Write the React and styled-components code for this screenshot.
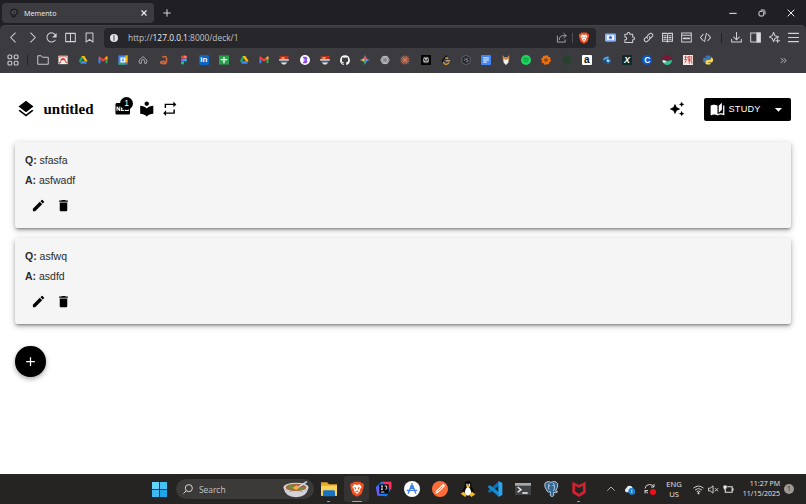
import React from "react";
import styled, { createGlobalStyle } from "styled-components";
import {
  MdLayers,
  MdFiberNew,
  MdLocalLibrary,
  MdRepeat,
  MdEdit,
  MdDelete,
  MdAdd,
  MdAutoAwesome,
  MdAutoStories,
  MdArrowDropDown
} from "react-icons/md";

const BraveLogo = () => (
  <svg viewBox="0 0 24 24">
    <path d="M7 1h10l2 2.500 2-.2 1.500 3-1 2.700 .3 1-3 9.500L12 23.500 5.200 19.500 2.200 10l.3-1-1-2.700L3 3.300l2 .2z" fill="#f4501e" />
    <path d="M12 6l4-1 3 4-3 4 .5 2-4.500 4.500L7.500 15l.5-2-3-4 3-4z" fill="#fff" />
    <path d="M7.500 9l3.300 1-.6 3.500zM16.500 9l-3.300 1 .6 3.500zM9.500 15.300l2.500-1 2.500 1-2.500 1.800z" fill="#f4501e" />
  </svg>
);

const DriveLogo = () => (
  <svg viewBox="0 0 24 24">
    <path d="M8.500 2.500h7L12 8.700 5.500 20 2 14z" fill="#20a464" />
    <path d="M8.500 2.500h7L23 14.500h-7z" fill="#fbbc04" />
    <path d="M9 14.500h14L19.500 21h-14z" fill="#4285f4" />
  </svg>
);

const GmailLogo = () => (
  <svg viewBox="0 0 24 24">
    <path d="M1 6v14h5V10z" fill="#4285f4" />
    <path d="M23 6v14h-5V10z" fill="#34a853" />
    <path d="M1 6c0-2 2.500-3 4-1.700l7 5.200 7-5.200C20.500 3 23 4 23 6l-1 3-10 7L2 9z" fill="#e94235" />
    <path d="M23 6c0-2-2.500-3-4-1.700l-1 .8V12l5-4z" fill="#fbbc04" />
  </svg>
);

const SheepLogo = () => (
  <svg viewBox="0 0 24 24">
    <path d="M1 1l5 3 5-2 6 1 6-2-1 9H2z" fill="#c9301f" />
    <path d="M6 5h7v4H6z" fill="#f2b632" />
    <path d="M0 10h24l-1 4H1z" fill="#f3ece0" />
    <path d="M2 14h20l-2 4H4z" fill="#3465a8" />
    <path d="M4 18h16l-5 5H9z" fill="#e9e5da" />
  </svg>
);

const bookmarks = [
  <svg viewBox="0 0 24 24" fill="none" stroke="#c9c9cc" strokeWidth="2">
    <path d="M1.500 3.500h7l2.500 3h11.500v14h-21z" strokeLinejoin="round" />
  </svg>,
  <svg viewBox="0 0 24 24">
    <path d="M1 2h22v20H1z" fill="#f4eeec" />
    <path d="M1 2h22v4l-4 1-4-2-8 1-4 2-2-1z" fill="#e0a49d" />
    <path d="M5 13q1-6 7-6t7 6l-3 1q-4-4-8 0z" fill="#d8382b" />
    <path d="M3 20l4-4M17 15l4 4" stroke="#a3322c" strokeWidth="2.500" />
  </svg>,
  <DriveLogo />,
  <GmailLogo />,
  <svg viewBox="0 0 24 24">
    <path d="M1 1h22v22H1z" fill="#4285f4" />
    <path d="M18 1h5v17h-5z" fill="#fbbc04" />
    <path d="M1 18h17v5H1z" fill="#34a853" />
    <path d="M18 18h5l-5 5z" fill="#ea4335" />
    <path d="M6 6h12v12H6z" fill="#fff" />
    <path d="M12.500 8v8M13 8l-4 5h6" stroke="#4285f4" strokeWidth="1.800" fill="none" />
  </svg>,
  <svg viewBox="0 0 24 24" fill="none" stroke="#b9b9bd" strokeWidth="2">
    <path d="M8 20H4q-3-6 0-9l8-7 8 7q3 3 0 9h-4v-5a4 4 0 0 0-8 0z" strokeLinejoin="round" />
  </svg>,
  <svg viewBox="0 0 24 24" fill="none" stroke="#d4673b" strokeWidth="4">
    <path d="M8 5q9-4 10 3v7q-1 6-7 6-7 0-7-4l7-2 3 2" />
  </svg>,
  <svg viewBox="0 0 24 24">
    <path d="M12 1H8.500a3.600 3.600 0 0 0 0 7.300H12z" fill="#f24e1e" />
    <path d="M12 1h3.500a3.600 3.600 0 0 1 0 7.300H12z" fill="#ff7262" />
    <path d="M12 8.300H8.500a3.600 3.600 0 0 0 0 7.300H12z" fill="#a259ff" />
    <circle cx="15.500" cy="12" r="3.600" fill="#1abcfe" />
    <path d="M12 15.600H8.500a3.700 3.700 0 1 0 3.500 3.700z" fill="#0acf83" />
  </svg>,
  <LetterTile $bg="#0a66c2" $size="8px">in</LetterTile>,
  <svg viewBox="0 0 24 24">
    <path d="M0 1h24v22H0z" fill="#27a04c" />
    <path d="M12 5v15M4 11h16" stroke="#fff" strokeWidth="3" />
  </svg>,
  <DriveLogo />,
  <GmailLogo />,
  <SheepLogo />,
  <svg viewBox="0 0 24 24">
    <circle cx="12" cy="12" r="12" fill="#fff" />
    <path d="M7 4h7l4 3-2 5 2 5-4 3H7v-4h3V8H7z" fill="#8645e8" />
    <path d="M7 10h6v3H7z" fill="#c9a4ff" />
  </svg>,
  <SheepLogo />,
  <svg viewBox="0 0 24 24">
    <path
      d="M12 .5a12 12 0 0 0-3.800 23.300c.6.100.8-.3.800-.6v-2.200c-3.300.7-4-1.400-4-1.400-.6-1.400-1.300-1.800-1.300-1.800-1.100-.7.100-.7.100-.7 1.200.1 1.800 1.200 1.800 1.200 1.100 1.800 2.800 1.300 3.500 1 .1-.8.400-1.300.8-1.600-2.700-.3-5.500-1.300-5.500-6 0-1.300.5-2.400 1.200-3.200-.1-.3-.5-1.500.1-3.200 0 0 1-.3 3.300 1.200a11.500 11.500 0 0 1 6 0c2.300-1.500 3.300-1.200 3.300-1.200.7 1.700.2 2.900.1 3.200.8.800 1.200 1.900 1.200 3.200 0 4.700-2.800 5.700-5.500 6 .4.400.8 1.100.8 2.200v3.300c0 .3.200.7.800.6A12 12 0 0 0 12 .5z"
      fill="#fff"
    />
  </svg>,
  <svg viewBox="0 0 24 24">
    <path d="M12 0q2 9.500 12 12-10 2-12 12Q10 14 0 12 10 10 12 0z" fill="#4e8df5" />
    <path d="M12 0q1 6 5 9l-5 3-4-3.200Q11 6 12 0z" fill="#e5554a" />
    <path d="M0 12q6-1 8.500-3.500L12 12l-4 3.500Q5 13 0 12z" fill="#e9b92e" />
    <path d="M12 24q-1-5-4-8.500l4-3.500 2 3z" fill="#34a866" />
  </svg>,
  <svg viewBox="0 0 24 24" fill="none" stroke="#c8c8ca" strokeWidth="2">
    <ellipse cx="12" cy="12" rx="10" ry="5.500" />
    <ellipse cx="12" cy="12" rx="10" ry="5.500" transform="rotate(60 12 12)" />
    <ellipse cx="12" cy="12" rx="10" ry="5.500" transform="rotate(120 12 12)" />
    <circle cx="12" cy="12" r="3" />
  </svg>,
  <svg viewBox="0 0 24 24" stroke="#d97757" strokeWidth="2">
    <path d="M12 1v22M1 12h22M4 4l16 16M20 4L4 20M7.500 2l9 20M16.500 2l-9 20M2 7.500l20 9M2 16.500l20-9" />
  </svg>,
  <svg viewBox="0 0 24 24">
    <path d="M0 0h24v24H0z" fill="#050505" />
    <path
      d="M12 4v16M6 9h12v7H6zM7.500 5l4.500 4 4.500-4v4M7.500 5v4M12 10l-4 4v5M12 10l4 4v5"
      stroke="#e5e5e5"
      strokeWidth="1.500"
      fill="none"
    />
  </svg>,
  <svg viewBox="0 0 24 24" fill="none" strokeWidth="3">
    <path d="M14 1L4 12q-2 3 1 6" stroke="#111" />
    <path d="M17 9q-4-4-7-1M5 17l5 5q3 1 6-1l3-3" stroke="#e5a02d" />
    <path d="M11 14h11" stroke="#b9b9b9" />
  </svg>,
  <svg viewBox="0 0 24 24">
    <path d="M12 1l10 4v14l-10 4-10-4V5z" fill="#26272d" stroke="#666971" strokeWidth="2" />
    <path d="M7 8l4 3-4 3M17 8h-4v4h4v4h-5" stroke="#8c8f97" strokeWidth="1.800" fill="none" />
  </svg>,
  <svg viewBox="0 0 24 24">
    <rect x="0" y="0" width="24" height="24" rx="2" fill="#4285f4" />
    <path d="M5 7h14M5 12h14M5 17h9" stroke="#fff" strokeWidth="2.400" />
  </svg>,
  <svg viewBox="0 0 24 24">
    <path d="M4 0l4 5h8l4-5v10l-3 5-5 7-5-7-3-5z" fill="#c98745" />
    <path d="M6 9l6 3 6-3v9l-6 6-6-6z" fill="#f1eee8" />
  </svg>,
  <svg viewBox="0 0 24 24">
    <circle cx="12" cy="12" r="12" fill="#1ed760" />
    <path d="M5 8q8-2.500 14 1M6 12q7-2 12 1M7 16q6-1.500 10 .8" stroke="#178a42" strokeWidth="2.200" fill="none" />
  </svg>,
  <svg viewBox="0 0 24 24">
    <circle cx="12" cy="12" r="7" fill="none" stroke="#f0700d" strokeWidth="6" />
    <circle cx="12" cy="12" r="10.500" fill="none" stroke="#f0700d" strokeWidth="3" strokeDasharray="4 4.200" />
    <circle cx="12" cy="12" r="3" fill="#a34c10" />
  </svg>,
  <svg viewBox="0 0 24 24">
    <circle cx="12" cy="12" r="9.500" fill="#2c3d31" stroke="#24482b" strokeWidth="3" />
  </svg>,
  <LetterTile $bg="#fff" $color="#111" $size="10px">a</LetterTile>,
  <svg viewBox="0 0 24 24">
    <circle cx="11" cy="13" r="9" fill="#1b4f78" />
    <path d="M3 9q7-8 15-4l-5 5q-5-1-10 4z" fill="#4ba3e3" />
    <path d="M12 11q8-2 10 3-3 7-10 7l3-5z" fill="#2b82c9" />
    <circle cx="14" cy="14" r="3" fill="#bfe0f5" />
  </svg>,
  <LetterTile $bg="#10292c" $size="9px" $italic>X</LetterTile>,
  <LetterTile $bg="#0b57d0" $size="8.5px" $round>C</LetterTile>,
  <svg viewBox="0 0 24 24">
    <path d="M0 12a12 12 0 0 1 24 0z" fill="#7c1738" />
    <path d="M1 13l11 2 12-3a11 11 0 0 1-23 1z" fill="#35c48e" />
    <path d="M1 13q6-1 10 3-5 4-9 1z" fill="#f1eef0" />
  </svg>,
  <svg viewBox="0 0 24 24">
    <path d="M0 0h24v24H0z" fill="#f3e7e5" />
    <path d="M3 5h8M6 2v10M3 11h6l-5 8M12 4h9v6h-9zM15 4v17M12 14h9v7" stroke="#c93636" strokeWidth="1.800" fill="none" />
  </svg>,
  <svg viewBox="0 0 24 24">
    <path d="M7 1h8l3 2v7l-2 2H9l-3 3v3H2L0 13V9l2-3h10V5H6V3z" fill="#3b79b0" />
    <path d="M17 23H9l-3-2v-6l3-3h7l3-3V6h3l2 4v5l-3 3H12v1h6v2z" fill="#fdd545" />
  </svg>
];

const apps = [
  {
    name: "files",
    running: true,
    icon: (
      <svg viewBox="0 0 24 24">
        <path d="M0 2h9l3 3h12v17H0z" fill="#e5a823" />
        <path d="M0 7h24v15H0z" fill="#fbd35a" />
        <path d="M3 23v-7q0-2 2-2h14q2 0 2 2v7z" fill="#1672c4" />
      </svg>
    )
  },
  { name: "brave", running: true, active: true, icon: <BraveLogo /> },
  {
    name: "idea",
    icon: (
      <svg viewBox="0 0 24 24">
        <path d="M0 9l8-8 15 1v8L16 23 3 22z" fill="#087cfa" />
        <path d="M9 1h14v12l-7-5z" fill="#fe315d" />
        <path d="M0 9l7-2v13l-5 2z" fill="#6a5cff" />
        <path d="M5 5h14v14H5z" fill="#08080a" />
        <path d="M7.500 7.500h3M9 7.500v5M7.500 12.500h3M13 7.500h3v4q0 1-2 1M7.500 16.500h5" stroke="#fff" strokeWidth="1.300" fill="none" />
      </svg>
    )
  },
  {
    name: "studio",
    icon: (
      <svg viewBox="0 0 24 24">
        <circle cx="12" cy="12" r="12" fill="#fff" />
        <path d="M12 3v5M11 8L6 19M13 8l5 11M4 14h16M8 11h8" stroke="#3b80e8" strokeWidth="2" fill="none" />
        <circle cx="12" cy="8" r="2.500" fill="#3b80e8" />
      </svg>
    )
  },
  {
    name: "postman",
    icon: (
      <svg viewBox="0 0 24 24">
        <circle cx="12" cy="12" r="12" fill="#ff6c37" />
        <path d="M17 4l3 3-10 10-5 2 2-5z" fill="#fff" />
        <path d="M8 16l8-8" stroke="#e45b2b" />
      </svg>
    )
  },
  {
    name: "tux",
    icon: (
      <svg viewBox="0 0 24 24">
        <path d="M12 0q5 0 5 6 0 3 3 7 3 8-4 10H8q-7-2-4-10 3-4 3-7 0-6 5-6z" fill="#090909" />
        <path d="M12 9q3 0 5 8-1 5-5 5t-5-5q2-8 5-8zM9.500 4h2v3h-2zM13 4h2v3h-2z" fill="#fff" />
        <path d="M9 8l3-2 4 2-4 2zM1 19l4-3 5 5-2 3zM14 21l4-5 5 4-6 4z" fill="#f6bd18" />
      </svg>
    )
  },
  {
    name: "code",
    icon: (
      <svg viewBox="0 0 24 24">
        <path d="M17 1L1 15l3 3 14-11z" fill="#0b6fb5" />
        <path d="M17 23L1 9l3-3 14 11z" fill="#168bd2" />
        <path d="M17 0l6 3v18l-6 3z" fill="#2ba5ee" />
      </svg>
    )
  },
  {
    name: "terminal",
    icon: (
      <svg viewBox="0 0 24 24">
        <path d="M0 3h24v18H0z" fill="#424345" />
        <path d="M0 3h24v4H0z" fill="#a7a9aa" />
        <path d="M4 9l5 4-5 4M11 18h8" stroke="#f3f3f3" strokeWidth="2" fill="none" />
      </svg>
    )
  },
  {
    name: "postgres",
    icon: (
      <svg viewBox="0 0 24 24" stroke="#d6e3ec" strokeWidth="1.200">
        <path d="M3 3q4-4 9-1 7-3 10 2 1 5-3 11l3 1q-3 3-6 1v5q-2 3-5 0v-6q-3 2-5-1Q1 8 3 3z" fill="#336791" />
        <path d="M9 4q-2 4 0 9M15 3q4 4 1 12M9 7l2 .5M14 7h2" fill="none" />
      </svg>
    )
  },
  {
    name: "mcafee",
    running: true,
    icon: (
      <svg viewBox="0 0 24 24">
        <path d="M2 1l10 5 10-5v17l-10 6-10-6zM6 7v8.500l6 3.500 6-3.500V7l-6 3z" fill="#d32230" fillRule="evenodd" />
      </svg>
    )
  }
];

const cards = [
  { question: "sfasfa", answer: "asfwadf" },
  { question: "asfwq", answer: "asdfd" }
];

const BrowserBar = () => (
  <Chrome>
    <TabStrip>
      <BrowserTab>
        <Glyph $size={10}>
          <svg viewBox="0 0 24 24" fill="#2b2c2f" stroke="#19191c" strokeWidth="2">
            <path d="M8 22l-1-5-4-3 2-9 7-3 8 3 1 8-5 4-1 4z" />
            <path d="M8 8l8-2v6l-6 2zM5 12l6-6" stroke="#55565b" />
          </svg>
        </Glyph>
        <TabTitle>Memento</TabTitle>
        <Glyph $size={6}>
          <svg viewBox="0 0 24 24" stroke="#f0f0f2" strokeWidth="4.500">
            <path d="M2 2l20 20M22 2L2 22" />
          </svg>
        </Glyph>
      </BrowserTab>
      <Glyph $size={8}>
        <svg viewBox="0 0 24 24" stroke="#d6d6da" strokeWidth="3">
          <path d="M12 1v22M1 12h22" />
        </svg>
      </Glyph>
      <WindowControls>
        <Glyph $size={8}>
          <svg viewBox="0 0 24 24" stroke="#eee" strokeWidth="3">
            <path d="M1 13h22" />
          </svg>
        </Glyph>
        <Glyph $size={8}>
          <svg viewBox="0 0 24 24" fill="none" stroke="#ddd" strokeWidth="3">
            <rect x="3" y="7" width="14" height="14" rx="3" />
            <path d="M8 3h9q4 0 4 4v9" />
          </svg>
        </Glyph>
        <Glyph $size={8}>
          <svg viewBox="0 0 24 24" stroke="#eee" strokeWidth="3">
            <path d="M2 2l20 20M22 2L2 22" />
          </svg>
        </Glyph>
      </WindowControls>
    </TabStrip>

    <Toolbar>
      <NavButtons>
        <svg viewBox="0 0 24 24">
          <path d="M16 2L6 12l10 10" />
        </svg>
        <svg viewBox="0 0 24 24">
          <path d="M8 2l10 10L8 22" />
        </svg>
        <svg viewBox="0 0 24 24">
          <path d="M20 18a10 10 0 1 1 1-11" />
          <path d="M22 5v6h-6z" fill="#d2d2d5" />
        </svg>
        <svg viewBox="0 0 24 24">
          <path d="M1.500 3h21v18h-21zM12 3v18" strokeLinejoin="round" />
        </svg>
        <svg viewBox="0 0 24 24">
          <path d="M4.500 2h15v20L12 16l-7.500 6z" strokeLinejoin="round" />
        </svg>
      </NavButtons>
      <Address>
        <Info>
          <svg viewBox="0 0 24 24">
            <circle cx="12" cy="12" r="12" fill="#e2e2e5" />
            <path d="M12 5v3M12 10v9" stroke="#29292d" strokeWidth="2.500" />
          </svg>
        </Info>
        <Url>
          http://<b>127.0.0.1</b>:8000/deck/1
        </Url>
        <Glyph $size={11}>
          <svg viewBox="0 0 24 24" fill="none" stroke="#aaaab0" strokeWidth="2">
            <path d="M3 9v13h17v-5M7 17q0-9 9-9h6M17 3l5 5-5 5" />
          </svg>
        </Glyph>
        <Separator $color="#505055" />
        <Glyph $size={12}>
          <BraveLogo />
        </Glyph>
      </Address>
      <Extensions>
        <svg viewBox="0 0 24 24">
          <rect x="0" y="3" width="24" height="18" rx="3" fill="#8ab0f5" stroke="none" />
          <rect x="4" y="7" width="16" height="10" fill="#f4f7ff" stroke="none" />
          <circle cx="12" cy="12" r="3.500" fill="#3868c8" stroke="none" />
        </svg>
        <svg viewBox="0 0 24 24">
          <path d="M2 5h5q0-4 3-4t3 4h6v6q4 0 4 3t-4 3v6H2v-6q4 0 4-3t-4-3z" strokeLinejoin="round" />
        </svg>
        <svg viewBox="0 0 24 24">
          <path d="M10 14q-3-3 0-6l4-4q3-3 6 0t0 6l-3 3M14 10q3 3 0 6l-4 4q-3 3-6 0t0-6l3-3" />
        </svg>
        <svg viewBox="0 0 24 24">
          <path d="M1 3h9l2 1.500L14 3h9v17h-9l-2 2-2-2H1zM12 4v17M4 8h5M4 12h5M4 16h5M15 8h5M15 12h5M15 16h5" />
        </svg>
        <svg viewBox="0 0 24 24">
          <path d="M1.500 2h21v20h-21zM1.500 7h21" />
          <path d="M6 14h5M14 14h4" strokeWidth="4" />
        </svg>
        <svg viewBox="0 0 24 24">
          <path d="M7 5l-6 7 6 7M17 5l6 7-6 7M14 3l-4 18" />
        </svg>
      </Extensions>
      <Separator $color="#222226" />
      <BrowserActions>
        <svg viewBox="0 0 24 24">
          <path d="M12 1v15M6 11l6 6 6-6M1.500 16v6h21v-6" />
        </svg>
        <svg viewBox="0 0 24 24">
          <path d="M1.500 2h21v20h-21z" />
          <path d="M15 2h7v20h-7z" fill="#e3e3e5" />
        </svg>
        <svg viewBox="0 0 24 24">
          <path d="M10 1l3 7 8 3-8 3-3 7-3-7-6-3 6-3zM19 15v8M15 19h8" strokeLinejoin="round" />
        </svg>
        <svg viewBox="0 0 24 24">
          <path d="M1 3h22M1 12h22M1 21h22" />
        </svg>
      </BrowserActions>
    </Toolbar>

    <BookmarkBar>
      <Glyph $size={12}>
        <svg viewBox="0 0 24 24" fill="none" stroke="#c9c9cc" strokeWidth="2.300">
          <rect x="2" y="2" width="7.500" height="7.500" rx="2" />
          <rect x="14.500" y="2" width="7.500" height="7.500" rx="2" />
          <rect x="2" y="14.500" width="7.500" height="7.500" rx="2" />
          <rect x="14.500" y="14.500" width="7.500" height="7.500" rx="2" />
        </svg>
      </Glyph>
      <BookmarkDivider $color="#252529" />
      <BookmarkList>
        {bookmarks.map((icon, index) => (
          <Bookmark key={index}>
            <Glyph $size={index === 0 ? 12 : 10}>{icon}</Glyph>
          </Bookmark>
        ))}
      </BookmarkList>
      <More>
        <svg viewBox="0 0 24 24" fill="none" stroke="#d2d2d5" strokeWidth="3">
          <path d="M3 4l8 8-8 8M13 4l8 8-8 8" />
        </svg>
      </More>
    </BookmarkBar>
  </Chrome>
);

const FlashCard = ({ question, answer }) => (
  <Card>
    <p>
      <b>Q:</b> {question}
    </p>
    <p>
      <b>A:</b> {answer}
    </p>
    <CardActions>
      <MdEdit />
      <MdDelete />
    </CardActions>
  </Card>
);

const Taskbar = () => (
  <TaskbarWrapper>
    <Glyph $size={15}>
      <svg viewBox="0 0 24 24">
        <path d="M0 0h11.300v11.300H0z" fill="#63d3fb" />
        <path d="M12.700 0H24v11.300H12.700z" fill="#45c0f5" />
        <path d="M0 12.700h11.300V24H0z" fill="#3cb8f2" />
        <path d="M12.700 12.700H24V24H12.700z" fill="#20a5ea" />
      </svg>
    </Glyph>
    <Search>
      <Glyph $size={10}>
        <svg viewBox="0 0 24 24" fill="none" stroke="#dededd" strokeWidth="2.300">
          <circle cx="14" cy="10" r="8.500" />
          <path d="M8 16l-7 7" />
        </svg>
      </Glyph>
      <span>Search</span>
      <Bowl viewBox="0 0 50 32">
        <ellipse cx="25" cy="12" rx="24" ry="9" fill="#d9d8db" />
        <path d="M1 12q3 18 24 19 21-1 24-19-7 9-24 9T1 12z" fill="#d3d3da" />
        <ellipse cx="25" cy="12" rx="20" ry="7" fill="#a5673a" />
        <path d="M9 11l8-4 4 5-6 4zM31 14l9-3-5 7z" fill="#5d9a3b" />
        <path d="M18 13l8-5 6 4-6 5z" fill="#efb14a" />
        <path d="M28 8l6 1-2 4zM13 14l6 1-2 3z" fill="#e23d2c" />
        <path d="M30 11L46 1" stroke="#c9dcf0" strokeWidth="3" />
      </Bowl>
    </Search>
    <AppList>
      {apps.map(app => (
        <AppButton key={app.name} $active={app.active}>
          <Glyph $size={16}>{app.icon}</Glyph>
          {app.running ? <Running $active={app.active} /> : null}
        </AppButton>
      ))}
    </AppList>
    <Tray>
      <Glyph $size={8}>
        <svg viewBox="0 0 24 24" fill="none" stroke="#ccc" strokeWidth="2.500">
          <path d="M1 17L12 6l11 11" />
        </svg>
      </Glyph>
      <Glyph $size={11}>
        <svg viewBox="0 0 24 24">
          <path d="M5 18a5 5 0 0 1 0-9q2-5 7-5 6 0 7 6l-7 8z" fill="#e8edf1" />
          <circle cx="17" cy="16" r="7.500" fill="#1683d8" />
          <path d="M17 12v8" stroke="#b9dcf7" strokeWidth="2" />
        </svg>
      </Glyph>
      <Glyph $size={12}>
        <svg viewBox="0 0 24 24" fill="none" stroke="#d0d0d0" strokeWidth="2">
          <path d="M2 11Q3 3 11 3q6 0 9 5M20 2v6h-6M8 20q-4-1-6-5M2 21v-6h6" />
          <circle cx="18" cy="18" r="6" fill="#f00f18" stroke="none" />
        </svg>
      </Glyph>
      <Language>
        <span>ENG</span>
        <span>US</span>
      </Language>
      <Status>
        <svg viewBox="0 0 24 24">
          <path d="M1 9q11-9 22 0M4.500 13q7.500-6.500 15 0M8 17q4-3.500 8 0" />
          <circle cx="12" cy="20" r="1.500" fill="#ddd" />
        </svg>
        <svg viewBox="0 0 24 24">
          <path d="M1 9h4l6-5v16l-6-5H1zM15 9l7 7M22 9l-7 7" />
        </svg>
        <svg viewBox="0 0 24 24">
          <path d="M9 6h11v12H5v-5M22 10v4" strokeWidth="2.500" />
          <path d="M1 3h7v7H6v3H3v-3H1z" fill="#eee" stroke="none" />
        </svg>
      </Status>
      <Clock>
        <span>11:27 PM</span>
        <span>11/15/2025</span>
      </Clock>
      <Count>1</Count>
    </Tray>
  </TaskbarWrapper>
);

const App = () => (
  <Screen>
    <GlobalStyle />
    <BrowserBar />
    <Page>
      <DeckHeader>
        <DeckIcon />
        <h1>untitled</h1>
        <DeckTools>
          <BadgeWrapper>
            <MdFiberNew />
            <Badge>1</Badge>
          </BadgeWrapper>
          <MdLocalLibrary />
          <MdRepeat />
        </DeckTools>
        <Sparkles />
        <StudyButton>
          <MdAutoStories />
          <span>STUDY</span>
          <MdArrowDropDown />
        </StudyButton>
      </DeckHeader>
      <CardList>
        {cards.map(card => (
          <FlashCard key={card.question} {...card} />
        ))}
      </CardList>
      <AddButton>
        <MdAdd />
      </AddButton>
    </Page>
    <Taskbar />
  </Screen>
);

const GlobalStyle = createGlobalStyle`
  * {
    box-sizing: border-box;
  }

  body {
    margin: 0;
    overflow: hidden;
  }

  svg {
    display: block;
    flex-shrink: 0;
  }
`;

const Screen = styled.div`
  display: flex;
  flex-direction: column;
  width: 806px;
  height: 504px;
  background: #ffffff;
  font-family: "Liberation Sans", Arial, sans-serif;
  white-space: nowrap;
`;

const Chrome = styled.div`
  display: flex;
  flex-direction: column;
  height: 72.5px;
  background: #202024;
  font-family: "Open Sans", sans-serif;
`;

const Glyph = styled.span`
  display: flex;
  flex-shrink: 0;
  width: ${props => props.$size}px;
  height: ${props => props.$size}px;

  > svg {
    width: 100%;
    height: 100%;
  }
`;

const Separator = styled.span`
  width: 1px;
  height: 10px;
  background: ${props => props.$color};
`;

const TabStrip = styled.div`
  display: flex;
  align-items: center;
  height: 25px;
  padding-left: 2px;
`;

const BrowserTab = styled.div`
  display: flex;
  align-items: center;
  width: 152px;
  height: 20px;
  margin-right: 9px;
  padding: 0 7px;
  border-radius: 4px;
  background: #3b3b40;
`;

const TabTitle = styled.span`
  flex: 1;
  margin-left: 5px;
  color: #f1f1f3;
  font-size: 7.2px;
  font-weight: 500;
`;

const WindowControls = styled.div`
  display: flex;
  gap: 21px;
  margin-left: auto;
  padding-right: 11px;
`;

const Toolbar = styled.div`
  display: flex;
  align-items: center;
  height: 25px;
  border-top: 1px solid #434348;
  border-bottom: 1px solid #3b3b40;
  border-radius: 5px 5px 0 0;
  background: #3b3b40;

  svg {
    stroke-linecap: round;
  }
`;

const IconRow = styled.div`
  display: flex;
  align-items: center;

  svg {
    width: 11px;
    height: 11px;
    fill: none;
    stroke: #d2d2d5;
    stroke-width: 2.2;
  }
`;

const NavButtons = styled(IconRow)`
  gap: 8px;
  width: 104px;
  padding-left: 8px;
`;

const Address = styled.div`
  display: flex;
  align-items: center;
  width: 492px;
  height: 20px;
  padding: 0 6px;
  gap: 5px;
  border-radius: 4px;
  background: #27272b;
`;

const Info = styled.span`
  margin-right: 5px;

  svg {
    width: 8px;
    height: 8px;
  }
`;

const Url = styled.span`
  flex: 1;
  color: #c2c2c7;
  font-size: 8.4px;

  b {
    color: #ececef;
    font-weight: 400;
  }
`;

const Extensions = styled(IconRow)`
  gap: 8px;
  padding: 0 10px 0 9px;
`;

const BrowserActions = styled(IconRow)`
  gap: 8px;
  padding-left: 9px;
`;

const BookmarkBar = styled.div`
  display: flex;
  align-items: center;
  height: 22.5px;
  padding: 0 19px 2.5px 6.5px;
  background: #3b3b40;
`;

const BookmarkDivider = styled(Separator)`
  margin: 0 5px 0 8px;
`;

const BookmarkList = styled.div`
  display: grid;
  grid-template-columns: repeat(34, 20.17px);
`;

const Bookmark = styled.div`
  display: flex;
  justify-content: center;
  align-items: center;
  height: 12px;
`;

const More = styled.span`
  margin-left: auto;

  svg {
    width: 7px;
    height: 7px;
  }
`;

function LetterTile({ children, ...props }) {
  return <Tile {...props}>{children}</Tile>;
}

const Tile = styled.span`
  display: flex;
  justify-content: center;
  align-items: center;
  width: 10px;
  height: 10px;
  border-radius: ${props => (props.$round ? "50%" : "1px")};
  background: ${props => props.$bg};
  color: ${props => props.$color || "#ffffff"};
  font-family: "Liberation Sans", Arial, sans-serif;
  font-size: ${props => props.$size};
  font-style: ${props => (props.$italic ? "italic" : "normal")};
  font-weight: bold;
  line-height: 10px;
`;

const Page = styled.main`
  flex: 1;
  padding: 25px 15px 0;
`;

const DeckHeader = styled.header`
  display: flex;
  align-items: center;
  height: 23px;
  color: #000000;

  h1 {
    width: 70.5px;
    margin: 0;
    font-family: "Liberation Serif", "Times New Roman", serif;
    font-size: 15px;
    line-height: 23px;
  }
`;

const DeckIcon = styled(MdLayers)`
  width: 20px;
  height: 20px;
  margin-left: 0.5px;
  margin-right: 8px;
`;

const DeckTools = styled.div`
  display: flex;
  gap: 6px;

  svg {
    width: 17.5px;
    height: 17.5px;
  }
`;

const BadgeWrapper = styled.span`
  position: relative;
`;

const Badge = styled.span`
  position: absolute;
  top: -3px;
  right: -1.5px;
  width: 13px;
  height: 13px;
  border-radius: 50%;
  background: #000000;
  color: #ffffff;
  font-size: 8.5px;
  line-height: 13px;
  text-align: center;
`;

const Sparkles = styled(MdAutoAwesome)`
  width: 16px;
  height: 16px;
  margin-left: auto;
  margin-right: 18.5px;
`;

const StudyButton = styled.button`
  display: flex;
  align-items: center;
  width: 87.5px;
  height: 23px;
  padding: 0 4px 0 6px;
  border: 0;
  border-radius: 2px;
  background: #000000;
  color: #ffffff;
  font-family: "Liberation Sans", Arial, sans-serif;
  font-size: 9.2px;
  letter-spacing: 0.2px;

  span {
    flex: 1;
    margin-left: 4px;
    text-align: left;
  }

  svg {
    width: 15px;
    height: 15px;
  }

  svg:last-child {
    width: 17px;
    height: 17px;
  }
`;

const CardList = styled.div`
  display: flex;
  flex-direction: column;
  gap: 10px;
  margin-top: 21px;
`;

const Card = styled.article`
  height: 86px;
  padding: 8px 10px;
  border-radius: 2px;
  background: #f5f5f5;
  box-shadow: 0 2px 3px -1px rgba(0, 0, 0, 0.4), 0 2px 6px rgba(0, 0, 0, 0.28);
  color: #2b2b2b;
  font-size: 10.5px;

  p {
    margin: 0;
    line-height: 20px;
  }
`;

const CardActions = styled.div`
  display: flex;
  gap: 10px;
  padding: 8px 5.5px;
  color: #000000;

  svg {
    width: 15px;
    height: 15px;
  }
`;

const AddButton = styled.button`
  display: flex;
  justify-content: center;
  align-items: center;
  width: 30.5px;
  height: 30.5px;
  margin-top: 22.5px;
  padding: 0;
  border: 0;
  border-radius: 50%;
  background: #000000;
  box-shadow: 0 2px 5px rgba(0, 0, 0, 0.35);
  color: #ffffff;

  svg {
    width: 15px;
    height: 15px;
  }
`;

const TaskbarWrapper = styled.footer`
  display: flex;
  align-items: center;
  height: 30px;
  padding-left: 152px;
  background: #262423;
  color: #e6e6e6;
  font-family: "Open Sans", sans-serif;
`;

const Search = styled.div`
  display: flex;
  align-items: center;
  width: 138px;
  height: 20px;
  margin-left: 9px;
  padding: 0 5px 0 7px;
  border-radius: 10px;
  background: #3c3a39;
  font-size: 8.4px;

  span + span {
    flex: 1;
    margin-left: 6px;
    color: #c6c5c4;
  }
`;

const Bowl = styled.svg`
  width: 26px;
  height: 17px;
`;

const AppList = styled.div`
  display: flex;
  margin-left: 1px;
`;

const AppButton = styled.div`
  display: flex;
  justify-content: center;
  align-items: center;
  position: relative;
  width: 25px;
  height: 26px;
  margin: 0 1.39px;
  border-radius: 3px;
  background: ${props => (props.$active ? "#353332" : "transparent")};
`;

const Running = styled.span`
  position: absolute;
  bottom: 0;
  width: ${props => (props.$active ? "10px" : "3px")};
  height: 1.5px;
  border-radius: 1px;
  background: #a9a6a4;
`;

const Tray = styled.div`
  display: flex;
  align-items: center;
  gap: 9px;
  margin-left: auto;
  padding-right: 12px;
`;

const TrayText = styled.div`
  display: flex;
  flex-direction: column;
  font-size: 7px;
  line-height: 10px;
`;

const Language = styled(TrayText)`
  align-items: center;
  width: 16px;
  margin-left: 1px;
  font-size: 7.6px;
`;

const Status = styled.div`
  display: flex;
  gap: 4px;
  margin-left: 2px;

  svg {
    width: 11px;
    height: 11px;
    fill: none;
    stroke: #dddddd;
    stroke-width: 2;
  }
`;

const Clock = styled(TrayText)`
  align-items: flex-end;
  width: 37px;
`;

const Count = styled.span`
  width: 10px;
  height: 10px;
  margin-left: -5px;
  border-radius: 50%;
  background: #9c9a99;
  color: #262423;
  font-size: 7px;
  line-height: 10px;
  text-align: center;
`;

export default App;
